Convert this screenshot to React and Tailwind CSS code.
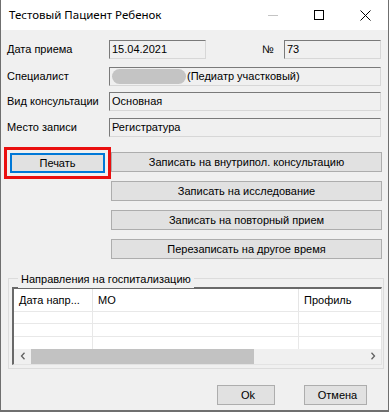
import React from 'react';

const font = { fontFamily: '"Liberation Sans", Arial, sans-serif' };

function Field({ className = '', children }) {
  return (
    <div
      className={`h-[19px] flex items-center bg-[#f0f0f0] border border-t-[#7a7a7a] border-l-[#7a7a7a] border-r-[#d7d7d7] border-b-[#d7d7d7] pl-[2px] text-[11px] text-black whitespace-nowrap overflow-hidden ${className}`}
    >
      {children}
    </div>
  );
}

function Btn({ className = '', children }) {
  return (
    <div
      className={`h-[20px] flex items-center justify-center bg-[#e1e1e1] border border-[#adadad] text-[11px] text-black ${className}`}
    >
      {children}
    </div>
  );
}

export default function App() {
  return (
    <div className="w-[389px] h-[412px] flex flex-col bg-white border-x border-b-2 border-[#6f6f6f] overflow-hidden" style={font}>
      {/* title bar */}
      <div className="h-[30px] shrink-0 flex items-center bg-white">
        <span className="pl-[8px] text-[11.5px] text-black" style={{ fontFamily: '"Noto Sans", sans-serif' }}>
          Тестовый Пациент Ребенок
        </span>
        <div className="ml-auto flex items-center">
          <div className="w-[46px] h-[30px] flex items-center justify-center">
            <div className="w-[10px] h-px bg-[#c4c4c4]" />
          </div>
          <div className="w-[46px] h-[30px] flex items-center justify-center">
            <div className="w-[10px] h-[10px] border border-black" />
          </div>
          <div className="w-[46px] h-[30px] flex items-center justify-center">
            <svg width="11" height="11" viewBox="0 0 11 11" fill="none" stroke="black" strokeWidth="1">
              <path d="M0.5 0.5L10.5 10.5M10.5 0.5L0.5 10.5" />
            </svg>
          </div>
        </div>
      </div>

      {/* body */}
      <div className="flex-1 bg-[#f0f0f0] flex flex-col">
        <div className="mt-[10px] flex items-center">
          <span className="w-[108px] pl-[6px] text-[11px]">Дата приема</span>
          <Field className="w-[97px]">15.04.2021</Field>
          <span className="ml-[56px] w-[22px] text-[11px]">№</span>
          <Field className="w-[97px]">73</Field>
        </div>

        <div className="mt-[8px] flex items-center">
          <span className="w-[108px] pl-[6px] text-[11px]">Специалист</span>
          <Field className="w-[272px]">
            <span className="w-[74px] h-[15px] rounded-full bg-[#c4c4c4] mr-[1px]" />
            (Педиатр участковый)
          </Field>
        </div>

        <div className="mt-[6px] flex items-center">
          <span className="w-[108px] pl-[6px] text-[11px]">Вид консультации</span>
          <Field className="w-[272px]">Основная</Field>
        </div>

        <div className="mt-[7px] flex items-center">
          <span className="w-[108px] pl-[6px] text-[11px]">Место записи</span>
          <Field className="w-[272px]">Регистратура</Field>
        </div>

        {/* buttons */}
        <div className="mt-[10px] flex items-start">
          <div className="ml-[3px] w-[107px] h-[32px] border-[3px] border-[#ea0f0f] flex items-center justify-center">
            <div className="w-[95px] h-[20px] flex items-center justify-center bg-[#e1e1e1] border-2 border-[#0078d7] text-[11px]">
              Печать
            </div>
          </div>
          <div className="mt-[5px] flex flex-col gap-[9px]">
            <Btn className="w-[271px]">Записать на внутрипол. консультацию</Btn>
            <Btn className="w-[271px]">Записать на исследование</Btn>
            <Btn className="w-[271px]">Записать на повторный прием</Btn>
            <Btn className="w-[271px]">Перезаписать на другое время</Btn>
          </div>
        </div>

        {/* group box */}
        <div className="relative mt-[19px] ml-[7px] w-[376px] h-[91px] border border-[#dcdcdc] pt-[8px] pl-[3px]">
          <span className="absolute -top-[8px] left-[9px] px-[3px] bg-[#f0f0f0] text-[11px]">
            Направления на госпитализацию
          </span>
          <div className="w-[370px] h-[78px] bg-white border-t-2 border-l-2 border-[#696969] border-r border-b border-r-[#e3e3e3] border-b-[#e3e3e3] flex flex-col">
            <div className="h-[24px] flex text-[11px]">
              <div className="w-[79px] pl-[5px] flex items-center border-r border-[#e5e5e5]">Дата напр...</div>
              <div className="w-[206px] pl-[5px] flex items-center border-r border-[#e5e5e5]">МО</div>
              <div className="flex-1 pl-[5px] flex items-center">Профиль</div>
            </div>
            {[0, 1, 2].map((i) => (
              <div key={i} className="h-[14px] flex border-t border-[#e8e8e8]">
                <div className="w-[79px] border-r border-[#e8e8e8]" />
                <div className="w-[206px] border-r border-[#e8e8e8]" />
                <div className="flex-1" />
              </div>
            ))}
            <div className="h-[17px] mt-auto flex items-center bg-[#f0f0f0]">
              <div className="w-[17px] flex items-center justify-center">
                <svg width="6" height="8" viewBox="0 0 6 8" fill="none" stroke="#606060" strokeWidth="1.3">
                  <path d="M4.5 0.8L1.5 4L4.5 7.2" />
                </svg>
              </div>
              <div className="w-[223px] h-[15px] bg-[#c2c2c2]" />
              <div className="ml-auto w-[17px] flex items-center justify-center">
                <svg width="6" height="8" viewBox="0 0 6 8" fill="none" stroke="#606060" strokeWidth="1.3">
                  <path d="M1.5 0.8L4.5 4L1.5 7.2" />
                </svg>
              </div>
            </div>
          </div>
        </div>

        {/* ok / cancel */}
        <div className="mt-[16px] flex">
          <Btn className="ml-[216px] w-[58px] pl-[4px]">Ok</Btn>
          <Btn className="ml-[29px] w-[63px] pl-[4px]">Отмена</Btn>
        </div>
      </div>
    </div>
  );
}
